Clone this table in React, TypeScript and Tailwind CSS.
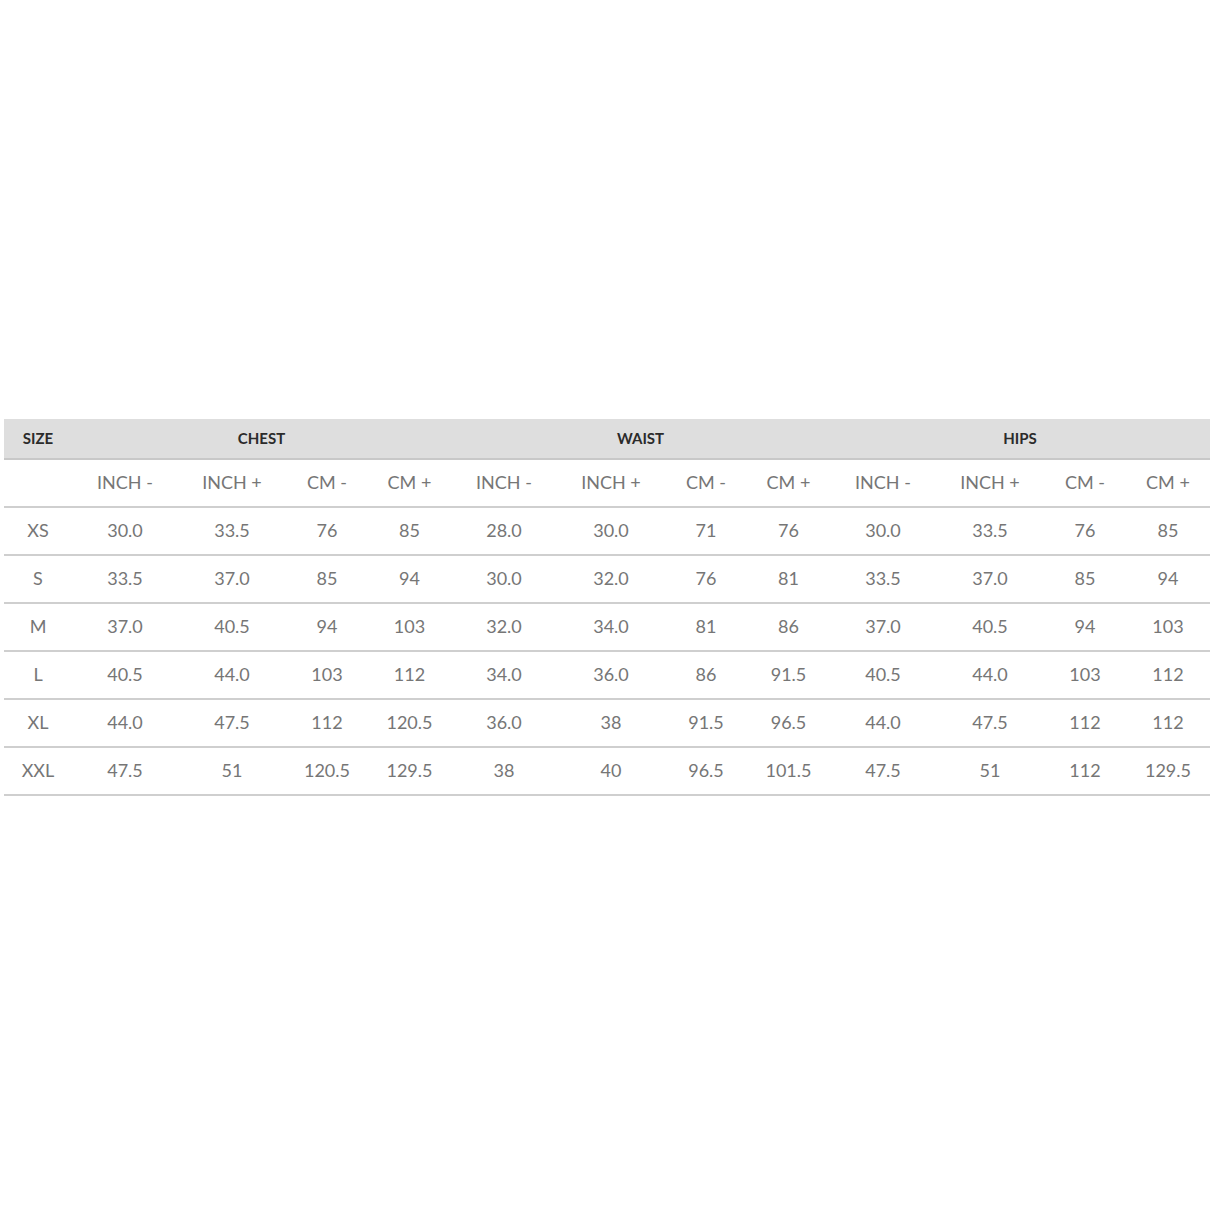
import React from 'react';

const cols = 'grid grid-cols-[68px_106px_108px_82px_83px_106px_108px_82px_83px_106px_108px_82px_84px]';
const subHeads = ['INCH -', 'INCH +', 'CM -', 'CM +'];

const rows: (string | number)[][] = [
  ['XS', '30.0', '33.5', '76', '85', '28.0', '30.0', '71', '76', '30.0', '33.5', '76', '85'],
  ['S', '33.5', '37.0', '85', '94', '30.0', '32.0', '76', '81', '33.5', '37.0', '85', '94'],
  ['M', '37.0', '40.5', '94', '103', '32.0', '34.0', '81', '86', '37.0', '40.5', '94', '103'],
  ['L', '40.5', '44.0', '103', '112', '34.0', '36.0', '86', '91.5', '40.5', '44.0', '103', '112'],
  ['XL', '44.0', '47.5', '112', '120.5', '36.0', '38', '91.5', '96.5', '44.0', '47.5', '112', '112'],
  ['XXL', '47.5', '51', '120.5', '129.5', '38', '40', '96.5', '101.5', '47.5', '51', '112', '129.5'],
];

const App: React.FC = () => {
  return (
    <div className="min-h-screen bg-white flex items-center justify-center" style={{ fontFamily: 'Lato, "Noto Sans", sans-serif' }}>
      <div className="w-[1206px]">
        {/* group header */}
        <div className="grid grid-cols-[68px_379px_379px_380px] h-[41px] bg-[#dedede] border-b-2 border-[#c8c8c8] items-center text-[15px] font-bold text-[#2b2b2b]">
          <div className="text-center">SIZE</div>
          <div className="text-center">CHEST</div>
          <div className="text-center">WAIST</div>
          <div className="text-center">HIPS</div>
        </div>

        {/* unit header */}
        <div className={`${cols} h-[48px] border-b-2 border-[#cfcfcf] items-center text-[18px] font-normal text-[#767676]`}>
          <div />
          {[0, 1, 2].flatMap((g) =>
            subHeads.map((h) => (
              <div key={`${g}-${h}`} className="text-center">
                {h}
              </div>
            ))
          )}
        </div>

        {rows.map((row) => (
          <div
            key={row[0]}
            className={`${cols} h-[48px] border-b-2 border-[#cfcfcf] items-center text-[18px] font-normal text-[#767676]`}
          >
            {row.map((cell, i) => (
              <div key={i} className="text-center">
                {cell}
              </div>
            ))}
          </div>
        ))}
      </div>
    </div>
  );
};

export default App;
